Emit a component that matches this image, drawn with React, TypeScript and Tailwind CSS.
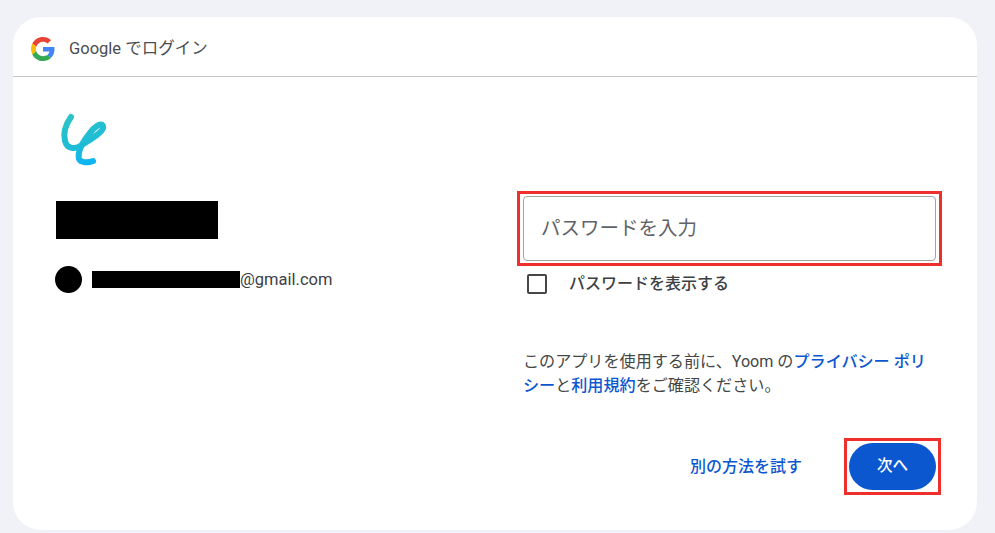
const fontStack = { fontFamily: '"Roboto", "Noto Sans CJK JP", sans-serif' }

function GoogleLogo() {
  return (
    <svg width="24" height="24" viewBox="0 0 48 48">
      <path fill="#EA4335" d="M24 9.5c3.54 0 6.71 1.22 9.21 3.6l6.85-6.85C35.9 2.38 30.47 0 24 0 14.62 0 6.51 5.38 2.56 13.22l7.98 6.19C12.43 13.72 17.74 9.5 24 9.5z" />
      <path fill="#4285F4" d="M46.98 24.55c0-1.57-.15-3.09-.38-4.55H24v9.02h12.94c-.58 2.96-2.26 5.48-4.78 7.18l7.73 6c4.51-4.18 7.09-10.36 7.09-17.65z" />
      <path fill="#FBBC05" d="M10.53 28.59c-.48-1.45-.76-2.99-.76-4.59s.27-3.14.76-4.59l-7.98-6.19C.92 16.46 0 20.12 0 24c0 3.88.92 7.54 2.56 10.78l7.97-6.19z" />
      <path fill="#34A853" d="M24 48c6.48 0 11.93-2.13 15.89-5.81l-7.73-6c-2.15 1.45-4.92 2.3-8.16 2.3-6.26 0-11.57-4.22-13.47-9.91l-7.98 6.19C6.51 42.62 14.62 48 24 48z" />
    </svg>
  )
}

function YoomLogo() {
  return (
    <svg width="56" height="60" viewBox="0 0 56 60" fill="none">
      <defs>
        <linearGradient id="yoom" gradientUnits="userSpaceOnUse" x1="16" y1="5" x2="34" y2="56">
          <stop offset="0" stopColor="#2cc4c4" />
          <stop offset="0.6" stopColor="#1fbcd6" />
          <stop offset="1" stopColor="#0cb4f6" />
        </linearGradient>
      </defs>
      <path
        d="M16 8 C11 15 8 24 10 32 C12 40 20 41 27 36 C36 30 50 22 48 17 C46 13 39 18 34 25 C28 33 22 42 24 50 C26 54 33 54 38 52"
        stroke="url(#yoom)"
        strokeWidth="6"
        strokeLinecap="round"
        strokeLinejoin="round"
      />
    </svg>
  )
}

export default function App() {
  return (
    <div className="h-[533px] w-[995px] overflow-hidden bg-[#f1f1f8] pl-[13px] pt-[17px]" style={fontStack}>
      <div className="flex h-[513px] w-[964px] flex-col rounded-[28px] bg-white">
        <header className="flex h-[60px] shrink-0 items-center gap-[14px] border-b border-[#c7c7c7] pl-[18px] pt-[4px]">
          <GoogleLogo />
          <span className="pt-[2px] text-[16.5px] text-[#4a4d51]">Google でログイン</span>
        </header>

        <main className="flex flex-1">
          <section className="w-[504px] shrink-0 pl-[42px] pt-[32px]">
            <YoomLogo />
            <div className="ml-px mt-[32px] h-[38px] w-[162px] bg-black" />
            <div className="mt-[27px] flex items-center gap-[10px]">
              <div className="h-[27px] w-[27px] rounded-full bg-black" />
              <div className="flex items-center text-[16.5px] text-[#3c4043]">
                <div className="h-[17px] w-[148px] bg-black" />
                <span className="pt-px">@gmail.com</span>
              </div>
            </div>
          </section>

          <section className="w-[425px] pt-[114px]">
            <div className="border-[3px] border-[#ee2f2b] py-[2px] pl-[3px] pr-[3px]">
              <div className="flex h-[65px] items-center rounded-[4px] border border-[#a3a3a3] pl-[17px] text-[19.5px] text-[#5f6368]">
                パスワードを入力
              </div>
            </div>

            <label className="mt-[6px] flex items-center pl-[10px]">
              <span className="h-[20px] w-[20px] rounded-[2px] border-2 border-[#444746]" />
              <span className="ml-[22px] text-[16px] font-medium text-[#3c4043]">パスワードを表示する</span>
            </label>

            <p className="mt-[54px] w-[410px] pl-[6px] text-[16.1px] leading-[24px] text-[#444746]">
              このアプリを使用する前に、Yoom の
              <a className="font-medium text-[#0b57d0]">プライバシー ポリ</a>
              <br />
              <a className="font-medium text-[#0b57d0]">シー</a>
              と
              <a className="font-medium text-[#0b57d0]">利用規約</a>
              をご確認ください。
            </p>

            <div className="mr-px mt-[40px] flex items-center justify-end">
              <a className="mr-[42px] text-[16px] font-medium text-[#0b57d0]">別の方法を試す</a>
              <div className="border-[3px] border-[#ee2f2b] p-[2px]">
                <button className="block h-[47px] w-[87px] rounded-full bg-[#0b57d0] text-[15.5px] font-medium text-white">
                  次へ
                </button>
              </div>
            </div>
          </section>
        </main>
      </div>
    </div>
  )
}
